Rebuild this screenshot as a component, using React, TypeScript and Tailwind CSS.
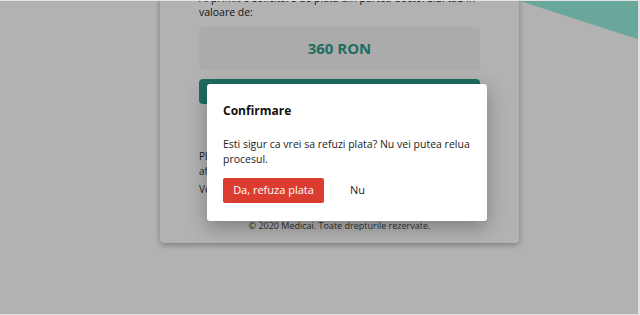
export default function App() {
  return (
    <div className="relative h-[315px] w-[640px] overflow-hidden bg-white font-['Open_Sans',sans-serif] border-t border-r-2 border-b border-[#e2e2e2]">
      {/* decorative teal band */}
      <svg className="absolute left-0 top-0 h-[315px] w-[640px]" viewBox="0 0 640 315">
        <polygon points="520,0 640,0 640,39" fill="#97efdf" />
      </svg>

      <div className="relative pl-[160px]">
        {/* Payment card */}
        <div className="-mt-[10px] w-[359px] rounded-b-sm bg-white px-[39px] pb-[10px] shadow-[0_2px_6px_rgba(0,0,0,0.3)]">
          <p className="text-[10.5px] leading-[14px] text-[#222]">
            Ai primit o solicitare de plata din partea doctorului tau in valoare de:
          </p>
          <div className="mt-[8px] flex h-[43px] items-center justify-center rounded bg-[#f5f5f5]">
            <span className="text-[15px] font-bold text-[#2f9e8c]">360 RON</span>
          </div>
          <button className="mt-[9px] h-[25px] w-full rounded-sm bg-[#2a9c8b] text-[11px] font-semibold text-white">
            Plateste acum
          </button>
          <p className="mt-[45px] text-[10px] leading-[15px] text-[#333]">
            Plata se efectueaza in siguranta prin procesatorul
            <br />
            afiliat, conform legislatiei in vigoare.
          </p>
          <p className="mt-[3px] text-[10px] leading-[15px] text-[#333]">Vezi termenii si conditiile.</p>
          <p className="mt-[22px] text-center text-[9px] text-[#444]">
            © 2020 Medicai. Toate drepturile rezervate.
          </p>
        </div>
      </div>

      {/* overlay */}
      <div className="absolute inset-0 bg-black/30" />

      {/* Modal */}
      <div className="absolute left-[207px] top-[83px] w-[280px] rounded-[3px] bg-white px-[16px] pt-[19px] pb-[18px] shadow-[0_6px_20px_rgba(0,0,0,0.3)]">
        <h2 className="text-[12px] font-bold leading-[16px] text-[#111]">Confirmare</h2>
        <p className="mt-[18px] text-[10.5px] leading-[15px] text-[#222]">
          Esti sigur ca vrei sa refuzi plata? Nu vei putea relua procesul.
        </p>
        <div className="mt-[11px] flex items-center">
          <button className="h-[25px] w-[101px] rounded-[2px] bg-[#dc3b2f] text-[11px] text-white">
            Da, refuza plata
          </button>
          <button className="ml-[26px] text-[11px] text-[#222]">Nu</button>
        </div>
      </div>
    </div>
  )
}
